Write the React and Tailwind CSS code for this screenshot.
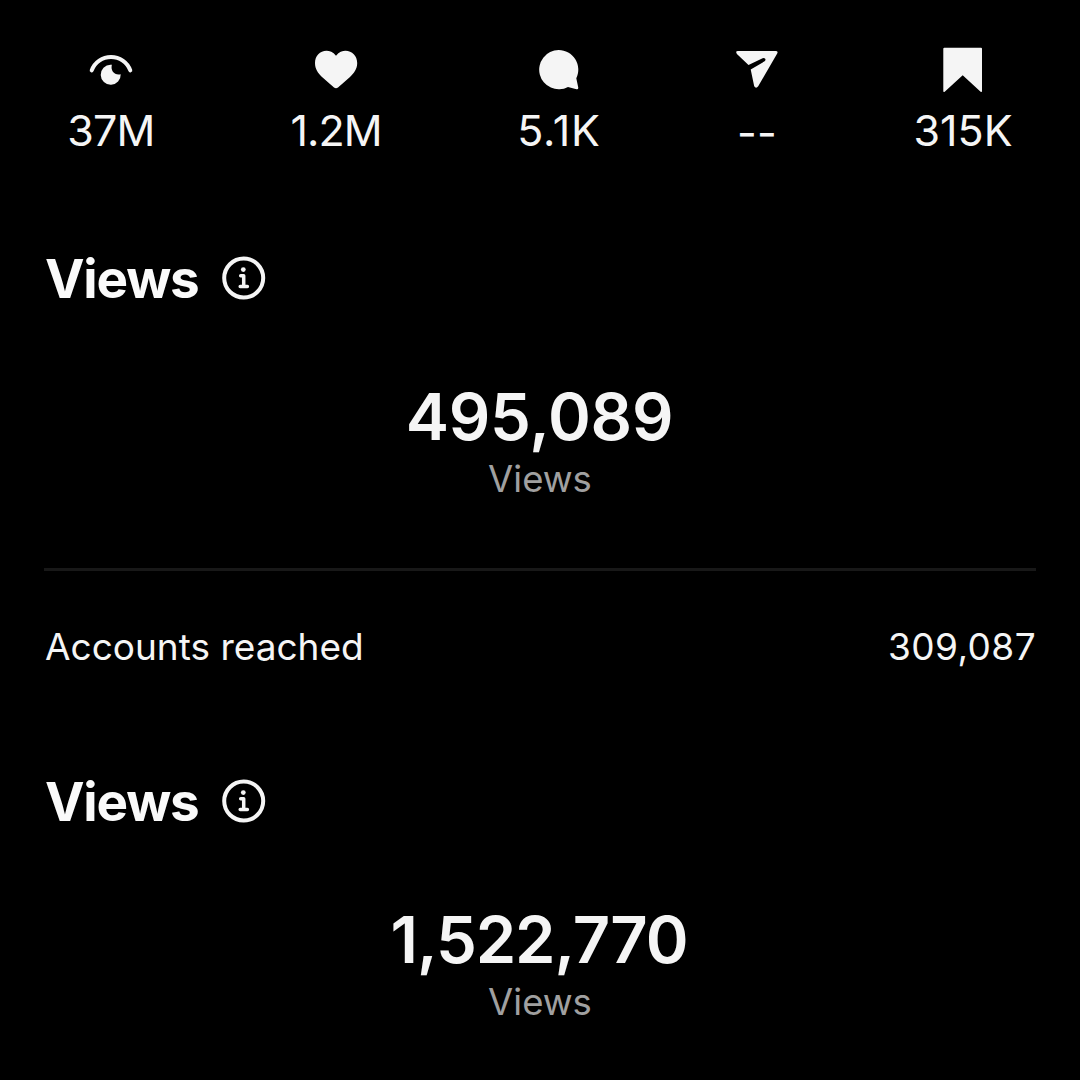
function Stat({ label, className, textClass, children }) {
  return (
    <div className={`flex flex-col items-center ${className}`}>
      <svg className="h-12 w-12 shrink-0" viewBox="0 0 48 48" fill="#f5f5f5">{children}</svg>
      <span className={`whitespace-nowrap text-[43px] leading-[52px] ${textClass}`}>{label}</span>
    </div>
  );
}

function Heading() {
  return (
    <div className="flex h-16 items-center pl-[1px]">
      <h2 className="w-[154px] whitespace-nowrap pt-px text-[53px] font-bold leading-16 tracking-[-1.2px] text-[#fafafa]">Views</h2>
      <svg className="ml-[23px] h-11 w-11" viewBox="0 0 44 44" fill="none" stroke="#f5f5f5">
        <circle cx="21.7" cy="22" r="19.5" strokeWidth="4" />
        <circle cx="21.3" cy="13.6" r="2.4" fill="#f5f5f5" stroke="none" />
        <path d="M18.7 19.7h3v10.4M18.2 30.5h7.2" strokeWidth="3.5" strokeLinecap="round" strokeLinejoin="round" />
      </svg>
    </div>
  );
}

function Total({ value, className }) {
  return (
    <div className="mt-[67px] flex flex-col items-center">
      <div className={`whitespace-nowrap text-[65px] font-semibold leading-20 ${className}`}>{value}</div>
      <div className="-mt-[2px] text-[36.5px] leading-[49px] text-[#a0a0a0]">Views</div>
    </div>
  );
}

export default function App() {
  return (
    <main className="h-[1080px] w-[1080px] overflow-hidden bg-black px-11 pt-[46px] font-['Inter',sans-serif] text-[#f5f5f5]">
      <div className="flex h-[112px] pl-6">
        <Stat label="37M" className="w-[86px]" textClass="mt-[10px] tracking-[-0.8px]">
          <path d="M4.7 24.4A20.6 20.6 0 0 1 43.3 24.4" fill="none" stroke="#f5f5f5" strokeWidth="4" strokeLinecap="round" />
          <path d="M24.8 19C23.5 25 27.5 29.5 33.7 28.2A10 10 0 1 1 23.6 18.7Q24.6 18.4 24.8 19Z" />
        </Stat>
        <Stat label="1.2M" className="ml-[137px] w-[90px]" textClass="mt-[10px] tracking-[-1px]">
          <path d="M24 9.7C27 6 30.5 4.8 33.5 4.8C40 4.8 45.2 10 45.2 17C45.2 23 42 27 38 31L26 41.5Q24 43 22 41.5L10 31C6 27 3 23 3 17C3 10 8 4.8 14.5 4.8C17.5 4.8 21 6 24 9.7Z" />
        </Stat>
        <Stat label="5.1K" className="ml-[137px] w-[82px]" textClass="mt-[10px] tracking-[0.9px]">
          <path d="M23.7 4.1A19.6 19.6 0 0 1 41.3 32.3L43.2 41.3Q43.6 43.6 41.5 43.2L33 41A19.6 19.6 0 1 1 23.7 4.1Z" />
        </Stat>
        <Stat label="--" className="ml-[137px] w-[40px]" textClass="mt-[12px] tracking-[0.3px]">
          <path d="M5 5H42.5Q45.5 5 44.2 7.6L25.2 40.3Q23 43 21.2 40.3L17.7 23.5L31.6 15.3Q33 14.2 32.2 12.8Q31.2 11.6 29.6 12.3L15.5 18.9L3.9 8Q2 5 5 5Z" />
        </Stat>
        <Stat label="315K" className="ml-[137px] w-[98px]" textClass="mt-[10px] tracking-[0px]">
          <path d="M5.3 1.8H42Q43 1.8 43 2.8V45Q42.9 46.7 41.6 45.7L23.7 29.3L5.7 45.7Q4.3 46.7 4.3 45V2.8Q4.3 1.8 5.3 1.8Z" />
        </Stat>
      </div>
      <section className="mt-[88px]">
        <Heading />
        <Total value="495,089" className="pr-px tracking-[-0.2px]" />
      </section>
      <div className="mt-[64px] h-[3px] bg-[#181818]" />
      <div className="mt-[48px] flex h-14 items-center justify-between text-[37px]">
        <span className="pl-px">Accounts reached</span>
        <span className="tracking-[0.4px]">309,087</span>
      </div>
      <section className="mt-[94px]">
        <Heading />
        <Total value="1,522,770" className="pr-[2px] tracking-[-1.1px]" />
      </section>
    </main>
  );
}
